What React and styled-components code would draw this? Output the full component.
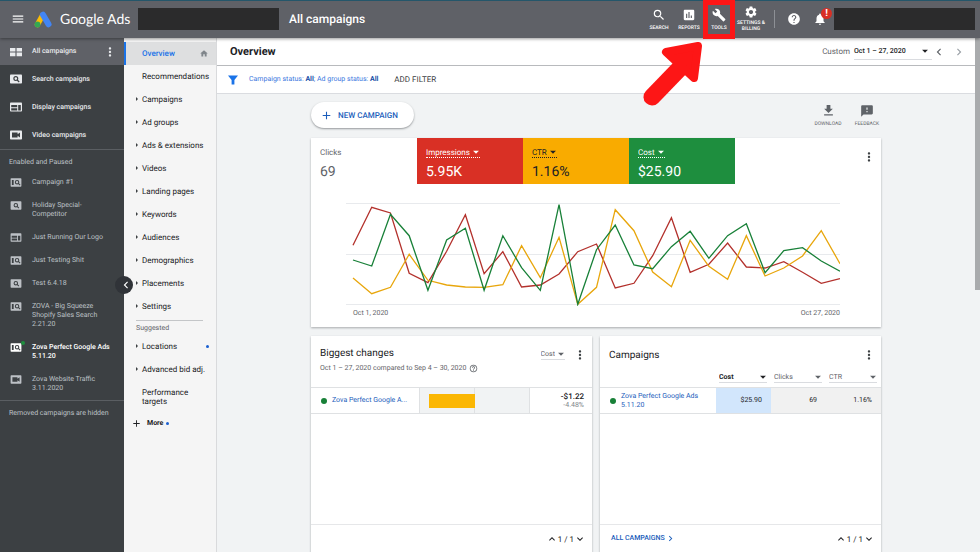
import React from "react";
import styled, { createGlobalStyle } from "styled-components";
import {
	MdAdd,
	MdArrowDropDown,
	MdBuild,
	MdChevronLeft,
	MdChevronRight,
	MdExpandLess,
	MdExpandMore,
	MdFeedback,
	MdFileDownload,
	MdHelp,
	MdHelpOutline,
	MdHome,
	MdInsertChart,
	MdMenu,
	MdMoreVert,
	MdNotifications,
	MdSearch,
	MdSettings,
} from "react-icons/md";

const channels = [
	{ name: "Search campaigns", icon: "search" },
	{ name: "Display campaigns", icon: "display" },
	{ name: "Video campaigns", icon: "video" },
];

const campaigns = [
	{ name: "Campaign #1", icon: "mixed" },
	{ name: "Holiday Special-Competitor", icon: "search" },
	{ name: "Just Running Our Logo", icon: "display" },
	{ name: "Just Testing Shit", icon: "mixed" },
	{ name: "Test 6.4.18", icon: "search" },
	{ name: "ZOVA - Big Squeeze Shopify Sales Search 2.21.20", icon: "mixed" },
	{ name: "Zova Perfect Google Ads 5.11.20", icon: "mixed", live: true },
	{ name: "Zova Website Traffic 3.11.2020", icon: "video" },
];

const sections = [
	{ name: "Overview", active: true },
	{ name: "Recommendations" },
	{ name: "Campaigns", caret: true },
	{ name: "Ad groups", caret: true },
	{ name: "Ads & extensions", caret: true },
	{ name: "Videos", caret: true },
	{ name: "Landing pages", caret: true },
	{ name: "Keywords", caret: true },
	{ name: "Audiences", caret: true },
	{ name: "Demographics", caret: true },
	{ name: "Placements", caret: true },
	{ name: "Settings", caret: true },
];

const suggested = [
	{ name: "Locations", caret: true, dot: true },
	{ name: "Advanced bid adj.", caret: true },
	{ name: "Performance targets" },
];

const metrics = [
	{ name: "Clicks", value: "69", bg: "#fff", color: "#5f6368", plain: true },
	{ name: "Impressions", value: "5.95K", bg: "#d93025", color: "#fff" },
	{ name: "CTR", value: "1.16%", bg: "#f9ab00", color: "#202124" },
	{ name: "Cost", value: "$25.90", bg: "#1e8e3e", color: "#fff" },
];

// one value per day, 0 is the bottom grid line and 304 the top one
const series = [
	{
		color: "#b3312c",
		values: [
			177, 291, 274, 93, 65, 159, 269, 92, 158, 52, 58, 91, 158, 181, 49, 63,
			146, 260, 96, 120, 184, 112, 109, 128, 96, 63, 77,
		],
	},
	{
		color: "#e8a60c",
		values: [
			79, 32, 51, 150, 72, 58, 52, 51, 59, 176, 80, 201, 0, 51, 284, 221, 97,
			53, 192, 114, 75, 206, 85, 109, 145, 221, 122,
		],
	},
	{
		color: "#188038",
		values: [
			133, 115, 270, 206, 42, 193, 228, 42, 206, 110, 42, 299, 0, 164, 238,
			118, 107, 173, 219, 138, 206, 242, 95, 161, 170, 130, 99,
		],
	},
];

const toPoints = (values) =>
	values
		.map((v, i) => `${7 + (i * 487) / 26},${(3 + (304 - v) / 3).toFixed(1)}`)
		.join(" ");

const Lens = ({ x = 6 }) => (
	<g fill="none" stroke="#3c4043" strokeWidth="1.2">
		<circle cx={x} cy="4.6" r="1.9" />
		<path d={`M${x + 1.4} 6l2 2`} />
	</g>
);

const CampaignIcon = ({ type }) => (
	<svg width="12" height="10" viewBox="0 0 12 10" aria-hidden="true">
		{type === "all" ? (
			<path
				fill="currentColor"
				d="M0 1h5.4v3.6H0zM6.6 1H12v3.6H6.6zM0 5.6h5.4v3.6H0zM6.6 5.6H12v3.6H6.6z"
			/>
		) : (
			<rect y="0.4" width="12" height="9.2" rx="0.8" fill="currentColor" />
		)}
		{type === "search" && <Lens x={5.8} />}
		{type === "display" && (
			<path
				fill="#3c4043"
				d="M1.2 3h6v2.2h-6zM1.2 6.2h6v2.2h-6zM8.2 3h2.6v5.4H8.2z"
			/>
		)}
		{type === "video" && (
			<path fill="#3c4043" d="M2 2.4h5.6v1.8l2.4-1.6v4.8L7.6 5.8v1.8H2z" />
		)}
		{type === "mixed" && (
			<>
				<path fill="#3c4043" d="M1.4 2.2h2v5.6h-2z" />
				<Lens x={7.2} />
			</>
		)}
	</svg>
);

const AdsLogo = () => (
	<svg width="18" height="17" viewBox="0 0 36 34" aria-hidden="true">
		<path
			d="M7 27L17 9"
			fill="none"
			stroke="#fbbc04"
			strokeWidth="11"
			strokeLinecap="round"
		/>
		<path
			d="M18 7.5L29 26.5"
			fill="none"
			stroke="#4285f4"
			strokeWidth="12"
			strokeLinecap="round"
		/>
		<circle cx="7" cy="27" r="5.8" fill="#34a853" />
	</svg>
);

const Pager = () => (
	<PagerBox>
		<IconButton aria-label="Previous page">
			<MdExpandLess size={12} />
		</IconButton>
		1 / 1
		<IconButton aria-label="Next page">
			<MdExpandMore size={12} />
		</IconButton>
	</PagerBox>
);

const Dropdown = ({ label, options, ...rest }) => (
	<SelectBox {...rest}>
		<select aria-label={label} defaultValue={options[0]}>
			{options.map((o) => (
				<option key={o}>{o}</option>
			))}
		</select>
		<MdArrowDropDown size={14} aria-hidden="true" />
	</SelectBox>
);

const SectionLink = ({ item }) => (
	<SectionItem href="#" $active={item.active}>
		<Caret $show={item.caret} />
		<span>{item.name}</span>
		{item.active && <MdHome size={10} />}
		{item.dot && <Dot $size={3} $color="#1a5fd0" />}
	</SectionItem>
);

const App = () => (
	<Shell>
		<GlobalStyle />
		<Header>
			<IconButton aria-label="Main menu">
				<MdMenu size={14} />
			</IconButton>
			<Brand href="#">
				<AdsLogo />
				Google Ads
			</Brand>
			<Redacted />
			<HeaderTitle>All campaigns</HeaderTitle>
			<Tools>
				<ToolButton>
					<MdSearch size={14} />
					Search
				</ToolButton>
				<ToolButton>
					<MdInsertChart size={14} />
					Reports
				</ToolButton>
				<ToolButton $marked>
					<MdBuild size={14} />
					Tools
					<Pointer viewBox="0 0 66 68" aria-hidden="true">
						<path
							d="M13 59L43 28"
							stroke="#fd1616"
							strokeWidth="17"
							strokeLinecap="round"
						/>
						<path
							d="M27 14L59 8L55 40Z"
							fill="#fd1616"
							stroke="#fd1616"
							strokeWidth="8"
							strokeLinejoin="round"
						/>
					</Pointer>
				</ToolButton>
				<ToolButton $wide>
					<MdSettings size={14} />
					Settings & Billing
				</ToolButton>
			</Tools>
			<Alerts>
				<IconButton aria-label="Help">
					<MdHelp size={14} />
				</IconButton>
				<IconButton aria-label="Notifications">
					<MdNotifications size={14} />
					<Badge>!</Badge>
				</IconButton>
			</Alerts>
			<Redacted />
		</Header>

		<Body>
			<Sidebar>
				<ChannelRow href="#" $active>
					<CampaignIcon type="all" />
					<span>All campaigns</span>
					<MdMoreVert size={14} />
				</ChannelRow>
				{channels.map((c) => (
					<ChannelRow key={c.name} href="#">
						<CampaignIcon type={c.icon} />
						<span>{c.name}</span>
					</ChannelRow>
				))}
				<SideNote>Enabled and Paused</SideNote>
				{campaigns.map((c) => (
					<CampaignRow key={c.name} href="#" $live={c.live}>
						<CampaignIcon type={c.icon} />
						{c.live && <LiveDot />}
						<span>{c.name}</span>
					</CampaignRow>
				))}
				<SideNote>Removed campaigns are hidden</SideNote>
				<Collapse aria-label="Collapse campaigns">
					<MdChevronLeft size={14} />
				</Collapse>
			</Sidebar>

			<SectionNav>
				{sections.map((s) => (
					<SectionLink key={s.name} item={s} />
				))}
				<SectionHeading>Suggested</SectionHeading>
				{suggested.map((s) => (
					<SectionLink key={s.name} item={s} />
				))}
				<MoreButton>
					<MdAdd size={11} />
					More
					<Dot $size={3} $color="#1a5fd0" />
				</MoreButton>
			</SectionNav>

			<Main>
				<TitleBar>
					<h1>Overview</h1>
					<DateRange>
						Custom
						<DateButton aria-haspopup="dialog">
							Oct 1 – 27, 2020
							<MdArrowDropDown size={14} />
						</DateButton>
						<IconButton aria-label="Previous period">
							<MdChevronLeft size={14} />
						</IconButton>
						<IconButton aria-label="Next period" $color="#9aa0a6">
							<MdChevronRight size={14} />
						</IconButton>
					</DateRange>
				</TitleBar>
				<FilterBar>
					<svg width="10" height="10" viewBox="0 0 10 10" aria-hidden="true">
						<path fill="#1a73e8" d="M0 .4h10L6.4 5v4.6H3.6V5z" />
					</svg>
					<a href="#">
						Campaign status: <b>All</b>; Ad group status: <b>All</b>
					</a>
					<FilterButton>ADD FILTER</FilterButton>
				</FilterBar>

				<Content>
					<Actions>
						<NewButton>
							<MdAdd size={13} />
							NEW CAMPAIGN
						</NewButton>
						<SmallAction>
							<MdFileDownload size={15} />
							Download
						</SmallAction>
						<SmallAction>
							<MdFeedback size={14} />
							Feedback
						</SmallAction>
					</Actions>

					<Card>
						<Metrics>
							{metrics.map((m) => (
								<Metric key={m.name} $bg={m.bg} $color={m.color}>
									{m.plain ? (
										<MetricName>{m.name}</MetricName>
									) : (
										<Dropdown label="Metric" options={[m.name]} $line="dotted" />
									)}
									<MetricValue>{m.value}</MetricValue>
								</Metric>
							))}
							<CardMenu aria-label="Chart options">
								<MdMoreVert size={14} />
							</CardMenu>
						</Metrics>
						<Chart>
							<svg viewBox="0 0 494 106" role="img" aria-label="Daily metrics">
								<path d="M0 3.5h494M0 54.5h494M0 104.5h494" stroke="#e8eaed" />
								{series.map((s) => (
									<polyline
										key={s.color}
										points={toPoints(s.values)}
										fill="none"
										stroke={s.color}
										strokeWidth="1.3"
									/>
								))}
							</svg>
							<Axis>
								<span>Oct 1, 2020</span>
								<span>Oct 27, 2020</span>
							</Axis>
						</Chart>
					</Card>

					<Cards>
						<Card>
							<CardHead>
								<div>
									<h2>Biggest changes</h2>
									<Subtitle>
										Oct 1 – 27, 2020 compared to Sep 4 – 30, 2020
										<MdHelpOutline size={9} />
									</Subtitle>
								</div>
								<Dropdown label="Change metric" options={["Cost"]} $line="solid" />
								<CardMenu aria-label="Biggest changes options">
									<MdMoreVert size={14} />
								</CardMenu>
							</CardHead>
							<ChangeRow>
								<ChangeName>
									<Dot $size={6} $color="#188038" />
									<a href="#">Zova Perfect Google A...</a>
								</ChangeName>
								<BarCell>
									<Bar />
								</BarCell>
								<ChangeValue>
									<b>-$1.22</b>
									-4.48%
								</ChangeValue>
							</ChangeRow>
							<Blank />
							<CardFoot>
								<Pager />
							</CardFoot>
						</Card>

						<Card>
							<CardHead $short>
								<h2>Campaigns</h2>
								<CardMenu aria-label="Campaigns options">
									<MdMoreVert size={14} />
								</CardMenu>
							</CardHead>
							<Table>
								<thead>
									<tr>
										<td />
										{["Cost", "Clicks", "CTR"].map((c, i) => (
											<th key={c} scope="col">
												<Dropdown
													label={`Column ${i + 1}`}
													options={[c]}
													$line="solid"
													$fill
													$strong={i === 0}
												/>
											</th>
										))}
									</tr>
								</thead>
								<tbody>
									<tr>
										<th scope="row">
											<RowName>
												<Dot $size={6} $color="#188038" />
												<a href="#">Zova Perfect Google Ads 5.11.20</a>
											</RowName>
										</th>
										<Num $sorted>$25.90</Num>
										<Num>69</Num>
										<Num>1.16%</Num>
									</tr>
								</tbody>
							</Table>
							<Blank />
							<CardFoot>
								<a href="#">
									ALL CAMPAIGNS
									<MdChevronRight size={11} />
								</a>
								<Pager />
							</CardFoot>
						</Card>
					</Cards>
				</Content>
			</Main>
			<ScrollTrack>
				<ScrollThumb />
			</ScrollTrack>
		</Body>
	</Shell>
);

const GlobalStyle = createGlobalStyle`
	* {
		box-sizing: border-box;
	}

	body {
		margin: 0;
		font-family: Roboto, "Liberation Sans", sans-serif;
		font-size: 7px;
		line-height: 9px;
		color: #202124;
		text-rendering: geometricPrecision;
	}

	h1,
	h2 {
		margin: 0;
	}

	h2 {
		font-size: 10px;
		line-height: 14px;
		font-weight: 400;
	}

	a {
		color: inherit;
		text-decoration: none;
	}

	button,
	select {
		margin: 0;
		padding: 0;
		border: none;
		background: none;
		color: inherit;
		font: inherit;
		text-rendering: inherit;
		cursor: pointer;
	}

	svg {
		flex-shrink: 0;
		display: block;
	}
`;

const Shell = styled.div`
	height: 100vh;
	display: flex;
	flex-direction: column;
	overflow: hidden;
`;

const Header = styled.header`
	position: relative;
	z-index: 3;
	height: 38px;
	flex-shrink: 0;
	display: flex;
	align-items: center;
	padding: 0 5px 1px 11px;
	border-top: 1px solid #24566a;
	background: #5f6167;
	color: #fff;
	box-shadow: 0 1px 3px rgba(0, 0, 0, 0.4);
`;

const IconButton = styled.button`
	position: relative;
	display: flex;
	color: ${({ $color }) => $color || "inherit"};
`;

const Brand = styled.a`
	display: flex;
	align-items: center;
	gap: 8px;
	width: 104px;
	margin: 0 0 0 9px;
	font-family: Lato, Roboto, sans-serif;
	font-size: 14px;
	line-height: 18px;
	white-space: nowrap;
`;

const Redacted = styled.div`
	width: 141px;
	height: 22px;
	background: #2b2b2c;
`;

const HeaderTitle = styled.div`
	margin-left: 10px;
	font-size: 12px;
	line-height: 16px;
	font-weight: 500;
`;

const Tools = styled.div`
	display: flex;
	margin-left: auto;
	padding-right: 6px;
`;

const ToolButton = styled.button`
	position: relative;
	width: ${({ $wide }) => ($wide ? 34 : 30)}px;
	height: 37px;
	display: flex;
	flex-direction: column;
	align-items: center;
	gap: ${({ $wide }) => ($wide ? 1 : 3)}px;
	padding-top: ${({ $wide }) => ($wide ? 4 : 7)}px;
	font-size: 5px;
	line-height: 6px;
	font-weight: 500;
	text-transform: uppercase;

	&::after {
		content: "";
		display: ${({ $marked }) => ($marked ? "block" : "none")};
		position: absolute;
		inset: -1px;
		border: 5px solid #fd1616;
	}
`;

const Pointer = styled.svg`
	position: absolute;
	top: 37px;
	right: 29px;
	width: 66px;
	height: 68px;
	fill: none;
	pointer-events: none;
`;

const Alerts = styled.div`
	display: flex;
	gap: 12px;
	padding: 2px 7px 2px 12px;
	border-left: 1px solid #8d9095;
`;

const Badge = styled.span`
	position: absolute;
	top: -4px;
	right: -5px;
	width: 11px;
	height: 11px;
	border-radius: 50%;
	background: #d93025;
	color: #fff;
	font-size: 10px;
	line-height: 11px;
	font-weight: 700;
	text-align: center;
`;

const Body = styled.div`
	flex: 1;
	min-height: 0;
	display: flex;
`;

const Sidebar = styled.nav`
	position: relative;
	z-index: 2;
	width: 124px;
	flex-shrink: 0;
	background: #3c4043;
	color: #bdc1c6;
`;

const ChannelRow = styled.a`
	height: ${({ $active }) => ($active ? 27 : 28)}px;
	display: flex;
	align-items: center;
	gap: 10px;
	padding: 0 7px 0 10px;
	background: ${({ $active }) => ($active ? "#5f6167" : "none")};
	color: #e8eaed;
	font-weight: 500;

	span {
		flex: 1;
	}
`;

const SideNote = styled.div`
	border-top: 1px solid #5a5e62;
	padding: 8px 9px 4px;
	white-space: nowrap;
`;

const CampaignRow = styled.a`
	position: relative;
	display: flex;
	gap: 10px;
	padding: 7px 14px 7px 10px;
	color: ${({ $live }) => ($live ? "#fff" : "inherit")};
	font-weight: ${({ $live }) => ($live ? 500 : 400)};

	svg {
		height: 9px;
	}
`;

const LiveDot = styled.i`
	position: absolute;
	top: 5px;
	left: 21px;
	width: 4px;
	height: 4px;
	border-radius: 50%;
	background: #1e8e3e;
`;

const Collapse = styled.button`
	position: absolute;
	top: 238px;
	right: -9px;
	width: 18px;
	height: 18px;
	display: flex;
	align-items: center;
	justify-content: flex-end;
	border-radius: 50%;
	background: #303338;
	color: #fff;
`;

const SectionNav = styled.nav`
	width: 93px;
	flex-shrink: 0;
	padding-top: 4px;
	border-right: 1px solid #d9dadc;
	background: #f5f5f5;
`;

const SectionItem = styled.a`
	display: flex;
	align-items: center;
	min-height: 23px;
	padding: 7px 7px 7px 10px;
	border-left: 2px solid ${({ $active }) => ($active ? "#1a73e8" : "transparent")};
	background: ${({ $active }) => ($active ? "#dedfe0" : "none")};
	color: ${({ $active }) => ($active ? "#1a73e8" : "#202124")};
	font-size: 8px;
	font-weight: ${({ $active }) => ($active ? 500 : 400)};

	span {
		flex: 1;
	}

	svg {
		height: 9px;
		color: #80868b;
	}
`;

const Caret = styled.i`
	width: 2px;
	margin: 0 4px 1px 0;
	border: 2px solid transparent;
	border-right: none;
	border-left-color: ${({ $show }) => ($show ? "#3c4043" : "transparent")};
`;

const Dot = styled.i`
	width: ${({ $size }) => $size}px;
	height: ${({ $size }) => $size}px;
	flex-shrink: 0;
	border-radius: 50%;
	background: ${({ $color }) => $color};
`;

const SectionHeading = styled.div`
	margin: 2px 13px 0 12px;
	border-top: 1px solid #c4c6c8;
	color: #5f6368;
	line-height: 14px;
`;

const MoreButton = styled.button`
	display: flex;
	align-items: center;
	gap: 3px;
	height: 21px;
	padding-left: 7px;
	font-weight: 700;

	svg {
		margin-right: 2px;
	}
`;

const Main = styled.main`
	flex: 1;
	min-width: 0;
	overflow: hidden;
	background: #f1f3f4;
`;

const TitleBar = styled.div`
	height: 28px;
	display: flex;
	align-items: center;
	justify-content: space-between;
	padding: 0 9px 0 13px;
	border-bottom: 1px solid #b8babd;
	background: #fff;

	h1 {
		font-size: 11px;
		line-height: 14px;
		font-weight: 700;
	}
`;

const DateRange = styled.div`
	display: flex;
	align-items: center;
	color: #5f6368;
	font-size: 8px;

	${IconButton} + ${IconButton} {
		margin-left: 6px;
	}
`;

const DateButton = styled.button`
	display: flex;
	align-items: center;
	justify-content: space-between;
	width: 78px;
	height: 17px;
	margin: 0 0 0 4px;
	border-bottom: 1px solid #dadce0;
	color: #202124;
	font-size: 7px;
	font-weight: 500;
`;

const FilterBar = styled.div`
	height: 28px;
	display: flex;
	align-items: center;
	padding: 0 11px;
	border-bottom: 1px solid #dadce0;
	background: #fff;

	a {
		margin: 0 16px 0 11px;
		color: #3b78e0;
	}

	b {
		color: #174ea6;
		font-weight: 700;
	}
`;

const FilterButton = styled.button`
	color: #3c4043;
	font-size: 8px;
`;

const Content = styled.div`
	padding: 8px 94px 0;
`;

const Actions = styled.div`
	display: flex;
	align-items: center;
	gap: 11px;
	margin-bottom: 10px;
`;

const NewButton = styled.button`
	display: flex;
	align-items: center;
	gap: 5px;
	height: 26px;
	margin-right: auto;
	padding: 0 16px 0 9px;
	border-radius: 13px;
	background: #fff;
	color: #1a5dbb;
	font-size: 8px;
	font-weight: 500;
	box-shadow: 0 1px 2px rgba(60, 64, 67, 0.5);
`;

const SmallAction = styled.button`
	width: 28px;
	display: flex;
	flex-direction: column;
	align-items: center;
	justify-content: flex-end;
	gap: 4px;
	height: 24px;
	color: #5f6368;
	font-size: 5px;
	line-height: 5px;
	text-transform: uppercase;
`;

const Card = styled.section`
	background: #fff;
	box-shadow: 0 1px 2px rgba(60, 64, 67, 0.4);
`;

const Metrics = styled.div`
	display: flex;
`;

const Metric = styled.div`
	width: 106px;
	height: 46px;
	display: flex;
	flex-direction: column;
	align-items: flex-start;
	gap: 5px;
	padding: 9px;
	background: ${({ $bg }) => $bg};
	color: ${({ $color }) => $color};
	font-size: 8px;
`;

const MetricName = styled.div`
	line-height: 11px;
`;

const MetricValue = styled.div`
	font-size: 14px;
	line-height: 18px;
`;

const SelectBox = styled.div`
	display: inline-grid;
	align-items: center;
	width: ${({ $fill }) => ($fill ? "100%" : "auto")};
	border-bottom: 1px ${({ $line }) => $line}
		${({ $line }) => ($line === "dotted" ? "currentColor" : "#dadce0")};
	font-weight: ${({ $strong }) => ($strong ? 700 : 400)};
	color: ${({ $line, $strong }) =>
		$line === "dotted" ? "inherit" : $strong ? "#202124" : "#5f6368"};

	select {
		grid-area: 1 / 1;
		appearance: none;
		height: 10px;
		padding-right: 10px;
		field-sizing: content;
	}

	svg {
		grid-area: 1 / 1;
		justify-self: end;
		margin: -2px -3px -2px 0;
		pointer-events: none;
	}
`;

const CardMenu = styled.button`
	display: flex;
	margin: 12px 5px 0 auto;
	align-self: flex-start;
	color: #3c4043;
`;

const Chart = styled.div`
	padding: 16px 41px 9px 35px;

	svg {
		width: 100%;
		height: auto;
	}
`;

const Axis = styled.div`
	display: flex;
	justify-content: space-between;
	padding: 3px 0 0 7px;
	color: #5f6368;
`;

const Cards = styled.div`
	display: grid;
	grid-template-columns: 1fr 1fr;
	gap: 8px;
	margin-top: 9px;
`;

const CardHead = styled.div`
	display: flex;
	align-items: flex-start;
	height: ${({ $short }) => ($short ? 34 : 51)}px;
	padding-left: 9px;

	> div:first-child,
	h2 {
		margin-right: auto;
	}

	> div:first-child,
	> h2 {
		padding-top: ${({ $short }) => ($short ? 13 : 11)}px;
	}

	${SelectBox} {
		margin-top: 13px;
	}

	${CardMenu} {
		margin-left: 8px;
	}
`;

const Subtitle = styled.div`
	display: flex;
	align-items: center;
	gap: 3px;
	margin-top: 3px;
	color: #5f6368;
	white-space: nowrap;
`;

const ChangeRow = styled.div`
	display: grid;
	grid-template-columns: 108px 1fr 62px;
	height: 27px;
	border: 1px solid #dfe1e3;
	border-width: 1px 0;
`;

const ChangeName = styled.div`
	display: flex;
	align-items: center;
	gap: 5px;
	padding-left: 10px;
	color: #1a5dbb;
	white-space: nowrap;
`;

const BarCell = styled.div`
	display: grid;
	grid-template-columns: 1fr 1fr;
	align-items: center;
	border: 1px solid #dfe1e3;
	border-width: 0 1px;
	background: linear-gradient(#dfe1e3, #dfe1e3) center / 1px 100% no-repeat #f1f3f4;
`;

const Bar = styled.div`
	height: 14px;
	margin-left: 9px;
	background: #fbb704;
`;

const ChangeValue = styled.div`
	display: flex;
	flex-direction: column;
	justify-content: center;
	padding-right: 8px;
	color: #80868b;
	text-align: right;

	b {
		color: #202124;
		font-size: 8px;
		font-weight: 500;
	}
`;

const Table = styled.table`
	width: 100%;
	table-layout: fixed;
	border-collapse: collapse;

	th,
	td {
		padding: 0;
		text-align: left;
		font-weight: 400;
	}

	thead th {
		width: 55px;
		height: 17px;
		padding: 2px 4px 4px 3px;
		vertical-align: bottom;
	}

	tbody tr {
		height: 26px;
		border: 1px solid #dfe1e3;
		border-width: 1px 0;
	}

	${SelectBox} {
		display: grid;
	}
`;

const RowName = styled.div`
	display: flex;
	align-items: center;
	gap: 5px;
	padding: 0 4px 0 10px;
	color: #1a5dbb;
`;

const Num = styled.td`
	&& {
		padding-right: 9px;
		background: ${({ $sorted }) => ($sorted ? "#d2e6fc" : "#f1f1f1")};
		text-align: right;
	}
`;

const Blank = styled.div`
	height: 110px;
`;

const CardFoot = styled.div`
	display: flex;
	align-items: flex-start;
	height: 40px;
	padding: 8px 6px 0 11px;
	border-top: 1px solid #e6e7e9;

	a {
		display: flex;
		align-items: center;
		color: #1a5dbb;
		font-weight: 500;
		line-height: 11px;
	}
`;

const PagerBox = styled.div`
	display: flex;
	align-items: center;
	margin-left: auto;
	font-size: 8px;
	line-height: 11px;
	white-space: nowrap;
`;

const ScrollTrack = styled.div`
	width: 5px;
	background: #f1f3f4;
`;

const ScrollThumb = styled.div`
	height: 49%;
	background: #a9abad;
`;

export default App;
